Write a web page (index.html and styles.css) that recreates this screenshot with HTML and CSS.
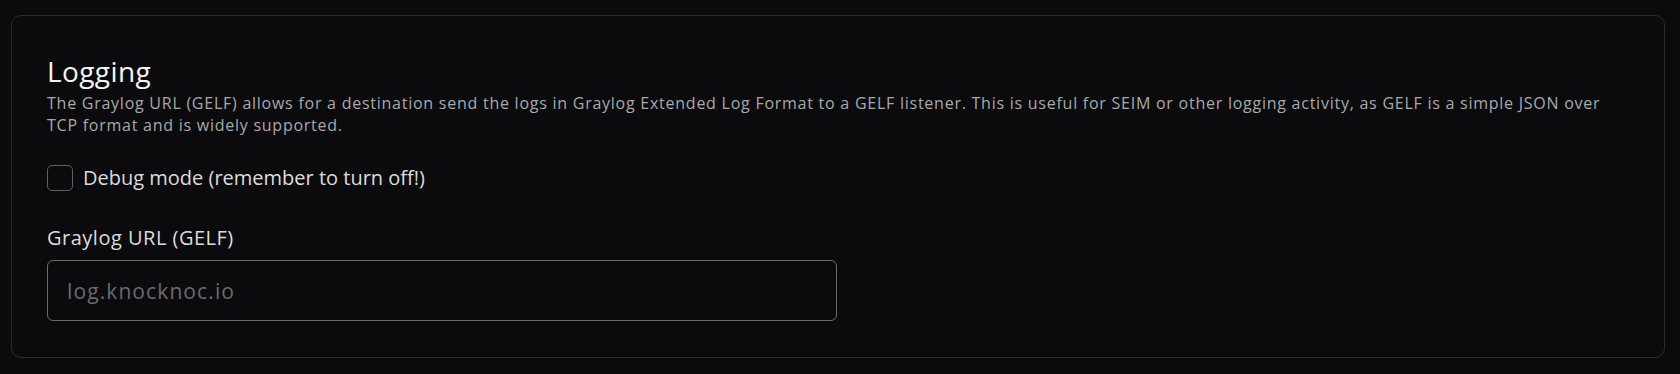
FILE: index.html
```html
<!DOCTYPE html>
<html lang="en">
<head>
<meta charset="utf-8">
<title>Logging</title>
<link rel="stylesheet" href="styles.css">
</head>
<body>
<section class="card">
  <h2 class="title">Logging</h2>
  <p class="desc">The Graylog URL (GELF) allows for a destination send the logs in Graylog Extended Log Format to a GELF listener. This is useful for SEIM or other logging activity, as GELF is a simple JSON over TCP format and is widely supported.</p>
  <label class="check-row">
    <input type="checkbox" class="check">
    <span class="check-label">Debug mode (remember to turn off!)</span>
  </label>
  <div class="field">
    <label class="field-label" for="gelf">Graylog URL (GELF)</label>
    <input id="gelf" class="text-input" type="text" placeholder="log.knocknoc.io">
  </div>
</section>
</body>
</html>
```
FILE: styles.css
```css
html, body {
  margin: 0;
  padding: 0;
  background: #0b0b0d;
}
body {
  padding: 15px 15px 17px 11px;
  font-family: "Open Sans", "Noto Sans", sans-serif;
}
.card {
  border: 1px solid #2b2b2e;
  border-radius: 10px;
  background: #0b0b0d;
  padding: 38px 35px 36px 35px;
  display: flex;
  flex-direction: column;
}
.title {
  margin: 0;
  font-size: 28px;
  line-height: 34px;
  font-weight: 400;
  color: #f4f4f4;
  letter-spacing: 0.4px;
}
.desc {
  margin: 4px 0 0 0;
  max-width: 1570px;
  font-size: 16px;
  line-height: 22px;
  color: #a9a9a9;
  letter-spacing: 0.75px;
}
.check-row {
  margin-top: 29px;
  display: flex;
  align-items: center;
  gap: 10px;
  cursor: pointer;
}
.check {
  appearance: none;
  -webkit-appearance: none;
  margin: 0;
  width: 26px;
  height: 26px;
  border: 1.5px solid #5f5f62;
  border-radius: 5px;
  background: transparent;
  flex: none;
}
.check-label {
  font-size: 20px;
  line-height: 26px;
  color: #dcdcdc;
}
.field {
  margin-top: 35px;
  display: flex;
  flex-direction: column;
  gap: 10px;
}
.field-label {
  font-size: 20px;
  line-height: 24px;
  color: #dcdcdc;
  letter-spacing: 0.5px;
}
.text-input {
  box-sizing: border-box;
  width: 790px;
  height: 61px;
  margin: 0;
  padding: 0 19px;
  border: 1.5px solid #6c6c6f;
  border-radius: 6px;
  background: #0b0b0d;
  color: #dcdcdc;
  font-family: "Open Sans", "Noto Sans", sans-serif;
  font-size: 21px;
  letter-spacing: 1.1px;
  outline: none;
}
.text-input::placeholder {
  color: #6a6a6d;
}
```
